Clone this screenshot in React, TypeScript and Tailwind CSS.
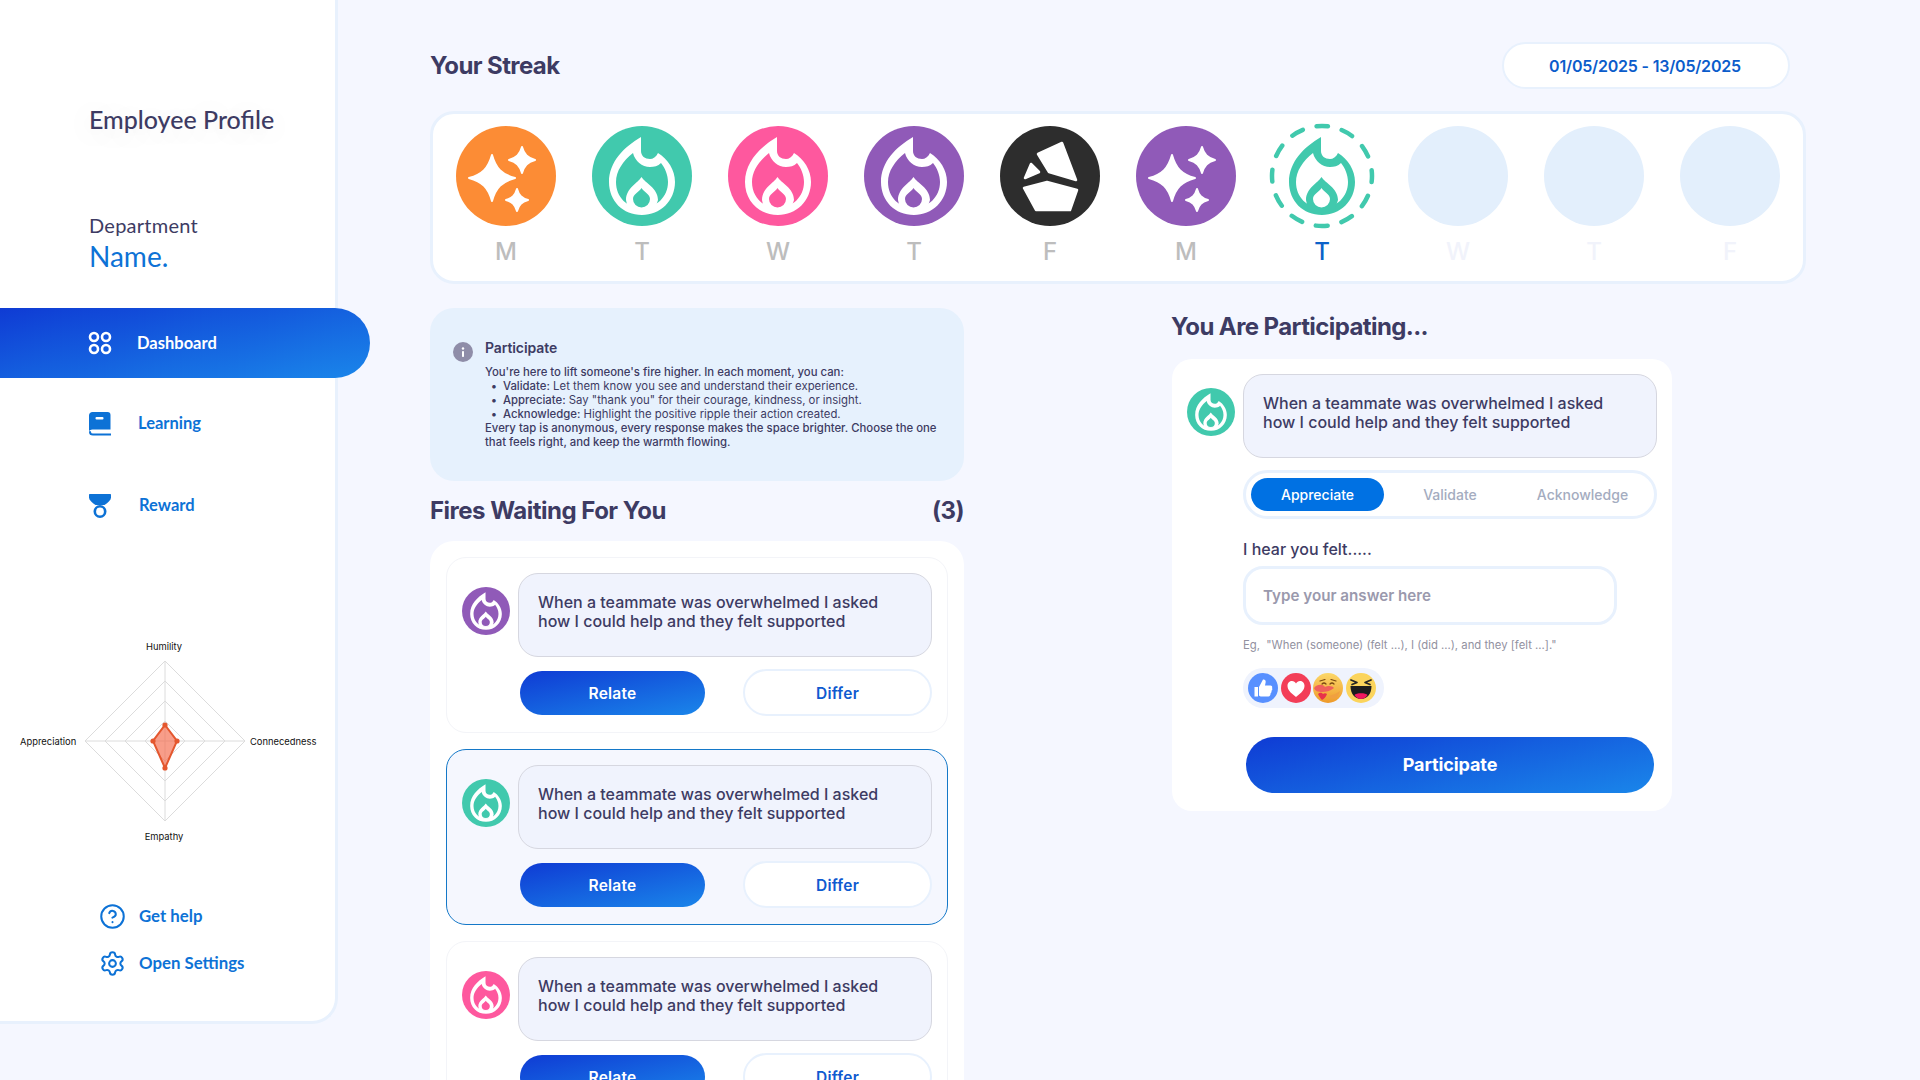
import React from "react";
import { CircleHelp, Settings } from "lucide-react";

const grad = "bg-[linear-gradient(168deg,#0f3bd4_0%,#1a86ea_100%)]";

function star(cx: number, cy: number, r: number) {
  const a = 0.16 * r, b = 0.42 * r;
  return `M${cx} ${cy - r} C${cx + a} ${cy - b} ${cx + b} ${cy - a} ${cx + r} ${cy} C${cx + b} ${cy + a} ${cx + a} ${cy + b} ${cx} ${cy + r} C${cx - a} ${cy + b} ${cx - b} ${cy + a} ${cx - r} ${cy} C${cx - b} ${cy - a} ${cx - a} ${cy - b} ${cx} ${cy - r} Z`;
}

function Flame({ fg, bg }: { fg: string; bg: string }) {
  return (
    <>
      <path fill={fg} d="M49 11 L49 25 C49 30 53 33 58 33 C61 33 64 31 66 27 C76 33 83 44 83 56 C83 75 68 89 50 89 C31 89 17 75 17 56 C17 36 32 21 49 11 Z" />
      <path fill={bg} d="M41 27 C43 35 50 41 58 41 C62 41 66 40 69 37 C73 42 76 49 76 56 C76 71 64 82 50 82 C35 82 24 71 24 56 C24 45 31 35 41 27 Z" />
      <path fill={fg} d="M49.5 51 C53 57 66 62 66 74 L63 83 L36 83 L34 74 C34 62 46 57 49.5 51 Z" />
      <path fill={bg} d="M49.5 62 C52 66 58 68 58 73 A8.5 8.5 0 0 1 41 73 C41 68 47 66 49.5 62 Z" />
    </>
  );
}

function FireBadge({ color, size }: { color: string; size: number }) {
  return (
    <svg width={size} height={size} viewBox="0 0 100 100" className="shrink-0">
      <circle cx="50" cy="50" r="50" fill={color} />
      <Flame fg="#fff" bg={color} />
    </svg>
  );
}

function SparkBadge({ color }: { color: string }) {
  return (
    <svg width="100" height="100" viewBox="0 0 100 100">
      <circle cx="50" cy="50" r="50" fill={color} />
      <g fill="#fff" stroke="#fff" strokeWidth="2" strokeLinejoin="round">
        <path d={star(36, 52, 23)} />
        <path d={star(66, 34, 13)} />
        <path d={star(61, 74, 11)} />
      </g>
    </svg>
  );
}

function StoneBadge() {
  return (
    <svg width="100" height="100" viewBox="0 0 100 100">
      <circle cx="50" cy="50" r="50" fill="#2d2d2d" />
      <g fill="#fff" stroke="#fff" strokeWidth="2.5" strokeLinejoin="round">
        <path d="M38 28 L62 17 L76 54 L49 46 Z" />
        <path d="M31 38 L39 46 L25 52 Z" />
        <path d="M24 62 L47 56 L77 64 L70 84 L36 84 Z" />
      </g>
    </svg>
  );
}

function DashedFire() {
  return (
    <svg width="108" height="108" viewBox="-4 -4 108 108" className="-m-[4px]">
      <circle cx="50" cy="50" r="50" fill="none" stroke="#41c9ad" strokeWidth="4.5" strokeLinecap="round" strokeDasharray="12 14.18" strokeDashoffset="6" transform="rotate(-90 50 50)" />
      <Flame fg="#41c9ad" bg="#fff" />
    </svg>
  );
}

const days: { l: string; kind: string }[] = [
  { l: "M", kind: "orange" },
  { l: "T", kind: "teal" },
  { l: "W", kind: "pink" },
  { l: "T", kind: "purple" },
  { l: "F", kind: "stone" },
  { l: "M", kind: "spark" },
  { l: "T", kind: "now" },
  { l: "W", kind: "none" },
  { l: "T", kind: "none" },
  { l: "F", kind: "none" },
];

function DayCell({ l, kind }: { l: string; kind: string }) {
  const labelColor = kind === "now" ? "text-[#0b62c9]" : kind === "none" ? "text-[#f1f3fb]" : "text-[#bdbdbd]";
  return (
    <div className="w-[136px] flex flex-col items-center">
      <div className="w-[100px] h-[100px] flex items-center justify-center">
        {kind === "orange" && <SparkBadge color="#fc8c35" />}
        {kind === "teal" && <FireBadge color="#41c9ad" size={100} />}
        {kind === "pink" && <FireBadge color="#fe589e" size={100} />}
        {kind === "purple" && <FireBadge color="#905ab8" size={100} />}
        {kind === "stone" && <StoneBadge />}
        {kind === "spark" && <SparkBadge color="#905ab8" />}
        {kind === "now" && <DashedFire />}
        {kind === "none" && <div className="w-[100px] h-[100px] rounded-full bg-[#e3effc]" />}
      </div>
      <div className={`mt-[11px] h-[30px] leading-[30px] text-[24px] font-medium ${labelColor}`}>{l}</div>
    </div>
  );
}

function Bubble() {
  return (
    <div className="w-[414px] h-[84px] shrink-0 rounded-[20px] border border-[#d6d7e0] bg-[#f0f3fd] pl-[19px] pt-[19px] text-[16px] leading-[19px] font-medium text-[#3d3b63]">
      When a teammate was overwhelmed I asked
      <br />
      how I could help and they felt supported
    </div>
  );
}

function FireItem({ color, active }: { color: string; active?: boolean }) {
  return (
    <div className={`w-[502px] h-[176px] shrink-0 rounded-[20px] border pt-[15px] px-[15px] ${active ? "border-[#1478c8] bg-[#f5f7fe]" : "border-[#f3f4f8] bg-white"}`}>
      <div className="flex gap-[8px]">
        <div className="mt-[14px]">
          <FireBadge color={color} size={48} />
        </div>
        <Bubble />
      </div>
      <div className="mt-[12px] ml-[58px] w-[412px] h-[47px] flex items-center justify-between">
        <button className={`w-[185px] h-[44px] pt-[2px] rounded-full ${grad} text-white text-[15.5px] font-semibold tracking-[0.25px]`}>Relate</button>
        <button className="w-[189px] h-[47px] pt-[2px] rounded-full border-[2px] border-[#e8f1fd] bg-white text-[#0f5ad0] text-[15.5px] font-semibold tracking-[0.25px]">Differ</button>
      </div>
    </div>
  );
}

function Radar() {
  const rings = [20, 40, 60, 80];
  const cx = 165, cy = 111;
  return (
    <svg width="336" height="220" viewBox="0 0 336 220" className="block">
      {rings.map((r) => (
        <polygon key={r} points={`${cx},${cy - r} ${cx + r},${cy} ${cx},${cy + r} ${cx - r},${cy}`} fill="none" stroke="#dcdcdc" strokeWidth="1" />
      ))}
      <line x1={cx} y1={cy - 80} x2={cx} y2={cy + 80} stroke="#dcdcdc" />
      <line x1={cx - 80} y1={cy} x2={cx + 80} y2={cy} stroke="#dcdcdc" />
      <polygon points={`${cx},${cy - 16} ${cx + 12},${cy} ${cx},${cy + 27} ${cx - 12},${cy}`} fill="#f4694a" fillOpacity="0.65" stroke="#e4572e" strokeWidth="2" />
      {[[0, -16], [12, 0], [0, 27], [-12, 0]].map(([x, y], i) => (
        <circle key={i} cx={cx + x} cy={cy + y} r="2.6" fill="#e4572e" />
      ))}
      <g fontSize="9.4" fill="#111" fontFamily="Inter, sans-serif">
        <text x="164" y="20" textAnchor="middle">Humility</text>
        <text x="164" y="210" textAnchor="middle">Empathy</text>
        <text x="20" y="115">Appreciation</text>
        <text x="250" y="115">Connecedness</text>
      </g>
    </svg>
  );
}

function Reactions() {
  return (
    <div className="mt-[15px] w-[141px] h-[40px] rounded-full bg-[#eff3fd] flex items-center pl-[5px] gap-[2.5px]">
      <svg width="30" height="30" viewBox="0 0 30 30">
        <circle cx="15" cy="15" r="15" fill="#5890ff" />
        <path fill="#fff" d="M6.5 14 H10 V23.5 H6.5 Z M11 14 L15 6.5 C17 6 18 7.5 17.6 9.5 L17 12.5 H22.5 C24 12.5 24.6 14 24 15 C24.6 16 24.4 17.3 23.4 17.8 C23.8 18.8 23.4 20 22.5 20.4 C22.7 21.6 22 23.5 20.5 23.5 H13.5 C12.2 23.5 11 22.8 11 22.5 Z" />
      </svg>
      <svg width="30" height="30" viewBox="0 0 30 30">
        <circle cx="15" cy="15" r="15" fill="#f33e58" />
        <path fill="#fff" d="M15 24 C9 19.5 6.5 16.5 6.5 12.8 C6.5 10 8.6 8 11 8 C12.7 8 14.2 8.9 15 10.5 C15.8 8.9 17.3 8 19 8 C21.4 8 23.5 10 23.5 12.8 C23.5 16.5 21 19.5 15 24 Z" />
      </svg>
      <svg width="30" height="30" viewBox="0 0 30 30">
        <defs>
          <linearGradient id="hug" x1="0" y1="0" x2="0" y2="1">
            <stop offset="0" stopColor="#fcd86a" />
            <stop offset="1" stopColor="#ee9a2a" />
          </linearGradient>
        </defs>
        <circle cx="15" cy="15" r="15" fill="url(#hug)" />
        <path d="M7 8 L12 6.5 M18 6.5 L23 8 M9 11 Q11 9 13 11 M17 11 Q19 9 21 11" fill="none" stroke="#7a4a12" strokeWidth="1.2" strokeLinecap="round" />
        <path fill="#f0605c" d="M1 15 C4 11 10 11 12 14 C15 12 20 13 21 15 C17 18 13 19 9 19 C5 19 2 18 1 15 Z" />
        <path fill="#e8324a" d="M5 21 C7 19 9 20 10 21 C11 20 13 20 14 21 C13 24 11 26 9 27 C7 25 6 23 5 21 Z" />
        <path fill="#f0a040" d="M16 23 Q22 22 27 18 Q26 23 21 26 Q18 26 16 23 Z" />
      </svg>
      <svg width="30" height="30" viewBox="0 0 30 30">
        <circle cx="15" cy="15" r="15" fill="#fbd45c" />
        <path d="M5 7 L11 9.5 L6 11.5 M25 7 L19 9.5 L24 11.5" fill="none" stroke="#262626" strokeWidth="1.7" strokeLinejoin="round" strokeLinecap="round" />
        <path fill="#1d1d1d" d="M4.5 13 H25.5 C25.5 21 21 26 15 26 C9 26 4.5 21 4.5 13 Z" />
        <path fill="#f2185f" d="M8.5 22 C10 19.5 20 19.5 21.5 22 C20 24.8 17.5 26 15 26 C12.5 26 10 24.8 8.5 22 Z" />
      </svg>
    </div>
  );
}

export default function App() {
  return (
    <div className="w-[1920px] h-[1080px] overflow-hidden bg-[#f5f7ff] flex items-start font-['Inter',sans-serif] text-[#3d3b63]">
      <aside className="w-[338px] h-[1024px] shrink-0 bg-white border-r-[3px] border-b-[3px] border-[#e8f1fd] rounded-br-[26px] pt-[103px] font-['Lato',sans-serif]">
        <div className="pl-[89px] h-[32px] leading-[32px] text-[25px] font-medium [text-shadow:0_4px_30px_rgba(60,60,100,0.14)]">Employee Profile</div>
        <div className="pl-[89px] mt-[78px] h-[24px] leading-[24px] text-[20px] tracking-[0.25px]">Department</div>
        <div className="pl-[89px] mt-[2px] h-[34px] leading-[34px] text-[28px] text-[#0d72d6]">Name.</div>
        <div className={`mt-[35px] w-[370px] h-[70px] relative z-10 rounded-r-full ${grad} flex items-center pl-[88px] text-white`}>
          <svg width="24" height="24" viewBox="0 0 24 24" fill="none" stroke="#fff" strokeWidth="2.6">
            <circle cx="6" cy="6" r="4" />
            <circle cx="18" cy="6" r="4" />
            <circle cx="6" cy="18" r="4" />
            <circle cx="18" cy="18" r="4" />
          </svg>
          <span className="ml-[25px] text-[16.5px] font-bold">Dashboard</span>
        </div>
        <div className="mt-[13px] h-[65px] flex items-center pl-[89px] text-[#0d72d6]">
          <svg width="22" height="24" viewBox="0 0 22 24">
            <path fill="#0d72d6" d="M3.5 0 H18.5 C20.5 0 21.5 1 21.5 3 V17.5 H3.5 C1.5 17.5 0 18.5 0 19.5 V3.5 C0 1.2 1.5 0 3.5 0 Z" />
            <rect x="6.5" y="5" width="8" height="2.5" rx="1" fill="#fff" />
            <path d="M1 20 C1 21.5 2.5 22.5 4 22.5 H21.5" stroke="#0d72d6" strokeWidth="2" fill="none" strokeLinecap="round" />
          </svg>
          <span className="ml-[27px] text-[16.5px] font-bold">Learning</span>
        </div>
        <div className="mt-[17px] h-[65px] flex items-center pl-[89px] text-[#0d72d6]">
          <svg width="22" height="24" viewBox="0 0 22 24">
            <path fill="#0d72d6" d="M1 0 H21 C21.6 0 22 0.4 22 1 V3.5 C22 6 19 8.5 15.5 11 H6.5 C3 8.5 0 6 0 3.5 V1 C0 0.4 0.4 0 1 0 Z" />
            <circle cx="11" cy="17.5" r="5.2" fill="none" stroke="#0d72d6" strokeWidth="2.6" />
          </svg>
          <span className="ml-[28px] text-[16.5px] font-bold">Reward</span>
        </div>
        <div className="mt-[92px]">
          <Radar />
        </div>
        <div className="mt-[50px] h-[32px] flex items-center pl-[99px] text-[#0d72d6]">
          <CircleHelp size={27} strokeWidth={1.8} />
          <span className="ml-[13px] text-[16.8px] font-bold">Get help</span>
        </div>
        <div className="mt-[15px] h-[32px] flex items-center pl-[99px] text-[#0d72d6]">
          <Settings size={27} strokeWidth={1.8} />
          <span className="ml-[13px] text-[16.8px] font-bold">Open Settings</span>
        </div>
      </aside>

      <main className="pl-[92px] pt-[42px] flex-1">
        <div className="w-[1360px] h-[47px] flex items-center justify-between">
          <h1 className="text-[24px] font-bold tracking-[-0.6px]">Your Streak</h1>
          <div className="w-[288px] h-[47px] pr-[2px] rounded-full border-[2px] border-[#e8f1fd] bg-white flex items-center justify-center text-[16px] font-semibold text-[#0b5ccb] tracking-[-0.2px]">01/05/2025 - 13/05/2025</div>
        </div>
        <div className="mt-[22px] w-[1376px] h-[173px] rounded-[24px] border-[3px] border-[#e8f1fd] bg-white pl-[5px] pt-[12px] flex">
          {days.map((d, i) => (
            <DayCell key={i} l={d.l} kind={d.kind} />
          ))}
        </div>

        <div className="mt-[24px] flex items-start">
          <div className="w-[534px] shrink-0">
            <div className="h-[173px] rounded-[24px] bg-[#e6f1fd] pl-[23px] pt-[31px] flex">
              <svg width="20" height="20" viewBox="0 0 20 20" className="mt-[3px] shrink-0">
                <circle cx="10" cy="10" r="10" fill="#8f8da8" />
                <rect x="9" y="9" width="2" height="6" rx="0.8" fill="#fff" />
                <circle cx="10" cy="6.5" r="1.2" fill="#fff" />
              </svg>
              <div className="ml-[12px] w-[466px]">
                <div className="h-[18px] leading-[18px] text-[14px] font-semibold tracking-[-0.1px]">Participate</div>
                <div className="mt-[8px] text-[11.35px] leading-[14px]">
                  <div className="font-medium">You're here to lift someone's fire higher. In each moment, you can:</div>
                  <ul>
                    <li className="flex"><span className="w-[18px] text-center">•</span><span><b className="font-medium">Validate:</b> <span className="font-normal">Let them know you see and understand their experience.</span></span></li>
                    <li className="flex"><span className="w-[18px] text-center">•</span><span><b className="font-medium">Appreciate:</b> <span className="font-normal">Say "thank you" for their courage, kindness, or insight.</span></span></li>
                    <li className="flex"><span className="w-[18px] text-center">•</span><span><b className="font-medium">Acknowledge:</b> <span className="font-normal">Highlight the positive ripple their action created.</span></span></li>
                  </ul>
                  <div className="font-medium">Every tap is anonymous, every response makes the space brighter. Choose the one that feels right, and keep the warmth flowing.</div>
                </div>
              </div>
            </div>
            <div className="mt-[14px] h-[32px] flex items-center justify-between text-[24px] font-bold tracking-[-0.5px]">
              <span>Fires Waiting For You</span>
              <span>(3)</span>
            </div>
            <div className="mt-[14px] rounded-[24px] bg-white pt-[16px] px-[16px] pb-[16px] flex flex-col gap-[16px]">
              <FireItem color="#905ab8" />
              <FireItem color="#41c9ad" active />
              <FireItem color="#fe589e" />
            </div>
          </div>

          <div className="ml-[208px] pt-[3px]">
            <h2 className="-ml-[1px] h-[32px] leading-[32px] text-[24px] font-bold tracking-[-0.6px]">You Are Participating...</h2>
            <div className="mt-[16px] w-[500px] rounded-[20px] bg-white pl-[15px] pr-[15px] pt-[15px] pb-[18px] flex gap-[8px]">
              <div className="mt-[14px]">
                <FireBadge color="#41c9ad" size={48} />
              </div>
              <div className="w-[414px]">
                <Bubble />
                <div className="mt-[12px] h-[49px] rounded-full border-[3px] border-[#e8f1fd] flex items-center pl-[5px] text-[14px] font-medium text-[#a4acc0]">
                  <div className="w-[133px] h-[33px] rounded-full bg-[#0071e3] text-white flex items-center justify-center">Appreciate</div>
                  <div className="w-[132px] text-center">Validate</div>
                  <div className="w-[133px] text-center">Acknowledge</div>
                </div>
                <div className="mt-[20px] h-[20px] leading-[20px] text-[16px] font-medium">I hear you felt.....</div>
                <div className="mt-[7px] w-[374px] h-[59px] pt-[2px] rounded-[20px] border-[3px] border-[#e8f1fd] flex items-center pl-[17px] text-[15.2px] font-semibold text-[#9a99ad]">Type your answer here</div>
                <div className="mt-[12px] h-[16px] leading-[16px] text-[11.3px] text-[#92919f]">Eg,&nbsp; "When (someone) (felt ...), I (did ...), and they [felt ...]."</div>
                <Reactions />
                <button className={`mt-[29px] ml-[3px] w-[408px] h-[56px] pb-[1px] rounded-full ${grad} text-white text-[18px] font-bold tracking-[-0.1px]`}>Participate</button>
              </div>
            </div>
          </div>
        </div>
      </main>
    </div>
  );
}
